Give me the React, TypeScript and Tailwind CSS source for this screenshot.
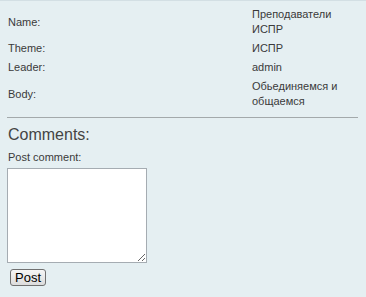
const rows: { label: string; value: string }[] = [
  { label: "Name:", value: "Преподаватели ИСПР" },
  { label: "Theme:", value: "ИСПР" },
  { label: "Leader:", value: "admin" },
  { label: "Body:", value: "Обьединяемся и общаемся" },
];

const App = () => {
  return (
    <div
      className="w-[366px] h-[297px] overflow-hidden bg-[#e5eff2] border-t border-[#d3dfe4] text-[#3a3a3a]"
      style={{ fontFamily: '"Liberation Sans", Arial, sans-serif' }}
    >
      <div className="pl-[6px] pt-[4px] w-[356px]">
        <div className="grid grid-cols-[244px_106px] text-[11px] leading-[15px]">
          {rows.map((row) => (
            <div key={row.label} className="contents">
              <div className="py-[2px] pl-[2px] flex items-center">{row.label}</div>
              <div className="py-[2px] pl-[2px]">{row.value}</div>
            </div>
          ))}
        </div>

        <div className="mt-[6px] border-t border-[#a3a9ab] w-[351px] ml-[1px]" />

        <h2 className="mt-[8px] pl-[2px] text-[16px] leading-[18px] text-[#444]">Comments:</h2>
        <div className="mt-[6px] pl-[2px] text-[11px] leading-[15px]">Post comment:</div>
        <textarea className="mt-[3px] ml-[1px] block w-[140px] h-[95px] bg-white border border-[#a5acb2] outline-none" />
        <button className="mt-[6px] ml-[4px] block w-[36px] h-[17px] rounded-[3px] border border-[#707070] bg-gradient-to-b from-[#f6f6f6] to-[#dcdcdc] text-[13px] leading-[15px] text-black">
          Post
        </button>
      </div>
    </div>
  );
};

export default App;
